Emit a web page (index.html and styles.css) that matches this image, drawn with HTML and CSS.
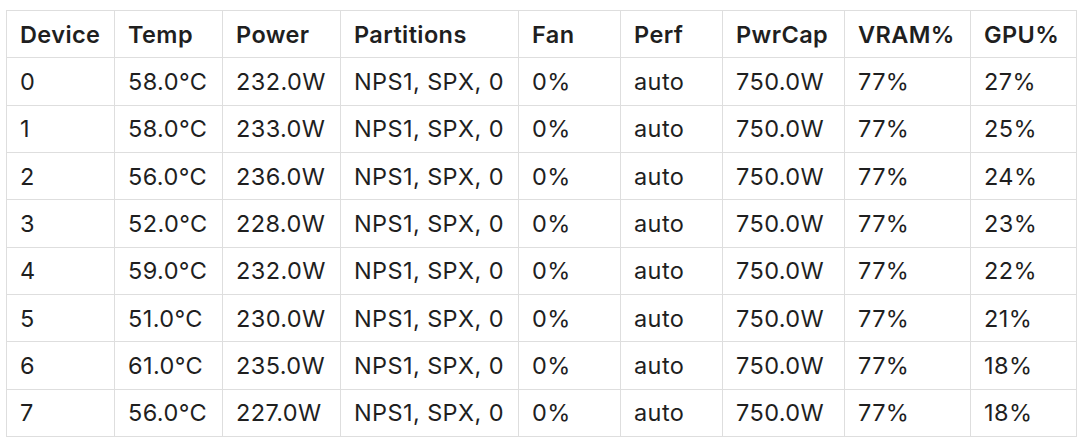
FILE: index.html
```html
<!DOCTYPE html>
<html>
<head>
<meta charset="utf-8">
<link rel="stylesheet" href="styles.css">
</head>
<body>
<table class="gpu-table">
  <colgroup>
    <col class="c1"><col class="c2"><col class="c3"><col class="c4"><col class="c5"><col class="c6"><col class="c7"><col class="c8"><col class="c9">
  </colgroup>
  <thead>
    <tr><th>Device</th><th>Temp</th><th>Power</th><th>Partitions</th><th>Fan</th><th>Perf</th><th>PwrCap</th><th>VRAM%</th><th>GPU%</th></tr>
  </thead>
  <tbody>
    <tr><td>0</td><td>58.0°C</td><td>232.0W</td><td>NPS1, SPX, 0</td><td>0%</td><td>auto</td><td>750.0W</td><td>77%</td><td>27%</td></tr>
    <tr><td>1</td><td>58.0°C</td><td>233.0W</td><td>NPS1, SPX, 0</td><td>0%</td><td>auto</td><td>750.0W</td><td>77%</td><td>25%</td></tr>
    <tr><td>2</td><td>56.0°C</td><td>236.0W</td><td>NPS1, SPX, 0</td><td>0%</td><td>auto</td><td>750.0W</td><td>77%</td><td>24%</td></tr>
    <tr><td>3</td><td>52.0°C</td><td>228.0W</td><td>NPS1, SPX, 0</td><td>0%</td><td>auto</td><td>750.0W</td><td>77%</td><td>23%</td></tr>
    <tr><td>4</td><td>59.0°C</td><td>232.0W</td><td>NPS1, SPX, 0</td><td>0%</td><td>auto</td><td>750.0W</td><td>77%</td><td>22%</td></tr>
    <tr><td>5</td><td>51.0°C</td><td>230.0W</td><td>NPS1, SPX, 0</td><td>0%</td><td>auto</td><td>750.0W</td><td>77%</td><td>21%</td></tr>
    <tr><td>6</td><td>61.0°C</td><td>235.0W</td><td>NPS1, SPX, 0</td><td>0%</td><td>auto</td><td>750.0W</td><td>77%</td><td>18%</td></tr>
    <tr><td>7</td><td>56.0°C</td><td>227.0W</td><td>NPS1, SPX, 0</td><td>0%</td><td>auto</td><td>750.0W</td><td>77%</td><td>18%</td></tr>
  </tbody>
</table>
</body>
</html>
```

FILE: styles.css
```css
html, body {
  margin: 0;
  padding: 0;
  background: #ffffff;
}
body {
  padding: 10px 0 0 6px;
  font-family: Inter, "Liberation Sans", sans-serif;
  color: #1f1f1f;
}
.gpu-table {
  border-collapse: collapse;
  table-layout: fixed;
  width: 1070px;
  font-size: 23.5px;
  letter-spacing: 0.4px;
}
.c1 { width: 108px; }
.c2 { width: 108px; }
.c3 { width: 118px; }
.c4 { width: 178px; }
.c5 { width: 102px; }
.c6 { width: 102px; }
.c7 { width: 122px; }
.c8 { width: 126px; }
.c9 { width: 106px; }
.gpu-table th,
.gpu-table td {
  border: 1px solid #dedede;
  height: 47.33px;
  padding: 0 0 0 13px;
  text-align: left;
  vertical-align: middle;
  white-space: nowrap;
  box-sizing: border-box;
}
.gpu-table th {
  font-weight: 600;
}
.gpu-table td {
  font-weight: 400;
}
```
